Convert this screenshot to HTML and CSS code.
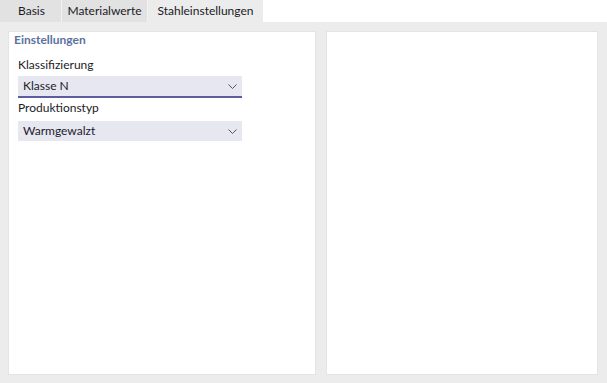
FILE: index.html
```html
<!DOCTYPE html>
<html lang="de">
<head>
<meta charset="UTF-8">
<meta name="viewport" content="width=device-width, initial-scale=1.0">
<title>Stahleinstellungen</title>
<link rel="stylesheet" href="styles.css">
</head>
<body>
<div class="tabs">
  <div class="tab tab-basis">Basis</div>
  <div class="tab tab-material">Materialwerte</div>
  <div class="tab tab-steel active">Stahleinstellungen</div>
</div>
<div class="main">
  <div class="panel panel-left">
    <div class="group-title">Einstellungen</div>
    <div class="field">
      <div class="label">Klassifizierung</div>
      <div class="select focused">
        <span>Klasse N</span>
        <svg width="9" height="5" viewBox="0 0 9 5"><path d="M0.5 0.5 L4.5 4.5 L8.5 0.5" fill="none" stroke="#555" stroke-width="1"/></svg>
      </div>
    </div>
    <div class="field">
      <div class="label">Produktionstyp</div>
      <div class="select">
        <span>Warmgewalzt</span>
        <svg width="9" height="5" viewBox="0 0 9 5"><path d="M0.5 0.5 L4.5 4.5 L8.5 0.5" fill="none" stroke="#555" stroke-width="1"/></svg>
      </div>
    </div>
  </div>
  <div class="panel panel-right"></div>
</div>
</body>
</html>
```

FILE: styles.css
```css
*{
  margin: 0;
  padding: 0;
  box-sizing: border-box;
}
body{
  width: 607px;
  height: 383px;
  background-color: #fff;
  font-family: Lato, "Noto Sans", "Liberation Sans", sans-serif;
  font-size: 12px;
  line-height: 16px;
  color: #1b1b28;
  overflow: hidden;
}
.tabs{
  display: flex;
  height: 22px;
}
.tab{
  display: flex;
  align-items: center;
  justify-content: center;
  background-color: #e2e2e2;
  border-right: 1px solid #f2f2f2;
}
.tab-basis{
  width: 62px;
  padding-left: 2px;
}
.tab-material{
  width: 86px;
}
.tab-steel{
  width: 115px;
}
.tab.active{
  background-color: #ececec;
  border-right: 0;
}
.main{
  display: flex;
  gap: 10px;
  height: 361px;
  padding: 9px 9px 8px 8px;
  background-color: #ececec;
}
.panel{
  background-color: #fff;
  border: 1px solid #e4e4e4;
}
.panel-left{
  width: 308px;
}
.panel-right{
  width: 272px;
}
.group-title{
  padding-left: 5px;
  font-weight: 700;
  color: #5b71a0;
}
.field{
  padding-left: 9px;
  width: 233px;
}
.label{
  margin-top: 9px;
  margin-bottom: 3px;
}
.field + .field .label{
  margin-top: 2px;
  margin-bottom: 5px;
}
.select{
  display: flex;
  align-items: center;
  justify-content: space-between;
  height: 20px;
  padding: 0 5px 0 5px;
  background-color: #e7e7f1;
}
.select.focused{
  height: 22px;
  border-bottom: 2px solid #5d5d9e;
}
```
